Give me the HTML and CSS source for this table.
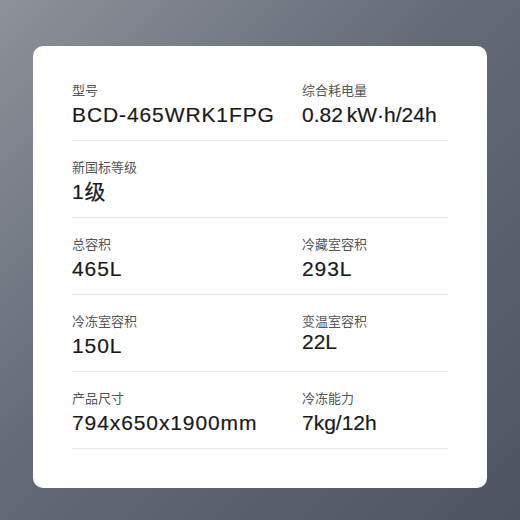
FILE: index.html
```html
<!DOCTYPE html>
<html>
  <head>
    <meta charset="utf-8" />
    <meta name="viewport" content="width=device-width, initial-scale=1.0" />
    <link rel="stylesheet" href="styles.css">
  </head>

  <body>
    <div class="spec-card">
      <div class="spec-row">
        <div class="spec-item">
          <div class="spec-label">型号</div>
          <div class="spec-value">BCD-465WRK1FPG</div>
        </div>
        <div class="spec-item">
          <div class="spec-label">综合耗电量</div>
          <div class="spec-value tight">0.82 kW·h/24h</div>
        </div>
      </div>
      <div class="spec-row">
        <div class="spec-item">
          <div class="spec-label">新国标等级</div>
          <div class="spec-value">1级</div>
        </div>
      </div>
      <div class="spec-row">
        <div class="spec-item">
          <div class="spec-label">总容积</div>
          <div class="spec-value">465L</div>
        </div>
        <div class="spec-item">
          <div class="spec-label">冷藏室容积</div>
          <div class="spec-value">293L</div>
        </div>
      </div>
      <div class="spec-row">
        <div class="spec-item">
          <div class="spec-label">冷冻室容积</div>
          <div class="spec-value">150L</div>
        </div>
        <div class="spec-item">
          <div class="spec-label">变温室容积</div>
          <div class="spec-value tight lift">22L</div>
        </div>
      </div>
      <div class="spec-row">
        <div class="spec-item">
          <div class="spec-label">产品尺寸</div>
          <div class="spec-value">794x650x1900mm</div>
        </div>
        <div class="spec-item">
          <div class="spec-label">冷冻能力</div>
          <div class="spec-value tight">7kg/12h</div>
        </div>
      </div>
    </div>
  </body>
</html>
```

FILE: styles.css
```css
html,
body {
  margin: 0;
  height: 100%;
}

body {
  background: linear-gradient(135deg, #8d9299 0%, #646b77 45%, #4d5563 100%);
  padding-top: 46px;
  box-sizing: border-box;
}

/*white card holding the spec table*/
.spec-card {
  width: 454px;
  margin: 0 auto;
  box-sizing: border-box;
  padding: 18px 39px 39px 39px;
  background-color: #fff;
  border-radius: 10px;
}

.spec-row {
  display: grid;
  grid-template-columns: 230px 1fr;
  height: 77px;
  box-sizing: border-box;
  padding-top: 17px;
  border-bottom: 1px solid #e8e8e8;
}

.spec-label {
  font-family: "Noto Sans CJK SC", sans-serif;
  font-size: 13px;
  line-height: 18px;
  color: #555;
}

.spec-value {
  margin-top: 3px;
  font-family: "Liberation Sans", "Noto Sans CJK SC", sans-serif;
  font-size: 21px;
  line-height: 26px;
  letter-spacing: 0.9px;
  color: #1a1a1a;
  -webkit-text-stroke: 0.2px #1a1a1a;
}

/*the unit sits close to the number*/
.spec-value.tight {
  letter-spacing: 0;
  word-spacing: -2px;
}

.spec-value.lift {
  margin-top: -1px;
}
```
